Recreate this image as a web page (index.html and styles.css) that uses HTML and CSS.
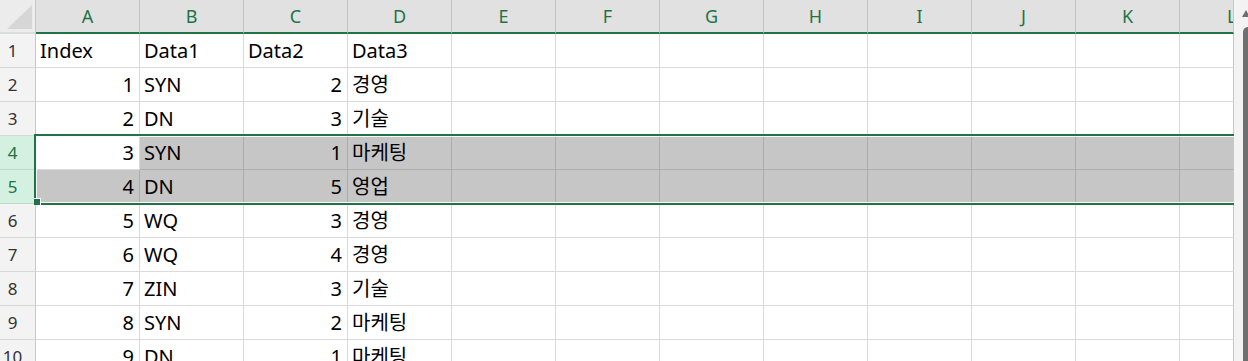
FILE: index.html
```html
<!DOCTYPE html>
<html>
<head>
    <meta http-equiv="Content-Type" content="text/html; charset=utf-8" />
    <title>Sheet1</title>
    <link rel="stylesheet" href="styles.css">
</head>
<body>
<div class="sheet">
    <div class="grid">
        <!--列标题-->
        <div class="row head">
            <div class="corner"><span class="tri"></span></div>
            <div class="ch">A</div><div class="ch">B</div><div class="ch">C</div><div class="ch">D</div>
            <div class="ch">E</div><div class="ch">F</div><div class="ch">G</div><div class="ch">H</div>
            <div class="ch">I</div><div class="ch">J</div><div class="ch">K</div><div class="ch last">L</div>
        </div>
        <div class="row">
            <div class="rh">1</div>
            <div class="c">Index</div><div class="c">Data1</div><div class="c">Data2</div><div class="c">Data3</div>
            <div class="c"></div><div class="c"></div><div class="c"></div><div class="c"></div>
            <div class="c"></div><div class="c"></div><div class="c"></div><div class="c last"></div>
        </div>
        <div class="row">
            <div class="rh">2</div>
            <div class="c num">1</div><div class="c">SYN</div><div class="c num">2</div><div class="c">경영</div>
            <div class="c"></div><div class="c"></div><div class="c"></div><div class="c"></div>
            <div class="c"></div><div class="c"></div><div class="c"></div><div class="c last"></div>
        </div>
        <div class="row">
            <div class="rh">3</div>
            <div class="c num">2</div><div class="c">DN</div><div class="c num">3</div><div class="c">기술</div>
            <div class="c"></div><div class="c"></div><div class="c"></div><div class="c"></div>
            <div class="c"></div><div class="c"></div><div class="c"></div><div class="c last"></div>
        </div>
        <div class="row">
            <div class="rh sel">4</div>
            <div class="c num">3</div><div class="c hl">SYN</div><div class="c hl num">1</div><div class="c hl">마케팅</div>
            <div class="c hl"></div><div class="c hl"></div><div class="c hl"></div><div class="c hl"></div>
            <div class="c hl"></div><div class="c hl"></div><div class="c hl"></div><div class="c hl last"></div>
        </div>
        <div class="row">
            <div class="rh sel">5</div>
            <div class="c hl num">4</div><div class="c hl">DN</div><div class="c hl num">5</div><div class="c hl">영업</div>
            <div class="c hl"></div><div class="c hl"></div><div class="c hl"></div><div class="c hl"></div>
            <div class="c hl"></div><div class="c hl"></div><div class="c hl"></div><div class="c hl last"></div>
        </div>
        <div class="row">
            <div class="rh">6</div>
            <div class="c num">5</div><div class="c">WQ</div><div class="c num">3</div><div class="c">경영</div>
            <div class="c"></div><div class="c"></div><div class="c"></div><div class="c"></div>
            <div class="c"></div><div class="c"></div><div class="c"></div><div class="c last"></div>
        </div>
        <div class="row">
            <div class="rh">7</div>
            <div class="c num">6</div><div class="c">WQ</div><div class="c num">4</div><div class="c">경영</div>
            <div class="c"></div><div class="c"></div><div class="c"></div><div class="c"></div>
            <div class="c"></div><div class="c"></div><div class="c"></div><div class="c last"></div>
        </div>
        <div class="row">
            <div class="rh">8</div>
            <div class="c num">7</div><div class="c">ZIN</div><div class="c num">3</div><div class="c">기술</div>
            <div class="c"></div><div class="c"></div><div class="c"></div><div class="c"></div>
            <div class="c"></div><div class="c"></div><div class="c"></div><div class="c last"></div>
        </div>
        <div class="row">
            <div class="rh">9</div>
            <div class="c num">8</div><div class="c">SYN</div><div class="c num">2</div><div class="c">마케팅</div>
            <div class="c"></div><div class="c"></div><div class="c"></div><div class="c"></div>
            <div class="c"></div><div class="c"></div><div class="c"></div><div class="c last"></div>
        </div>
        <div class="row">
            <div class="rh">10</div>
            <div class="c num">9</div><div class="c">DN</div><div class="c num">1</div><div class="c">마케팅</div>
            <div class="c"></div><div class="c"></div><div class="c"></div><div class="c"></div>
            <div class="c"></div><div class="c"></div><div class="c"></div><div class="c last"></div>
        </div>
        <!--选区 4:5 行-->
        <div class="selection"><span class="handle"></span></div>
    </div>
    <div class="vscroll">
        <span class="arrow"></span>
        <div class="thumb"></div>
    </div>
</div>
</body>
</html>
```

FILE: styles.css
```css
@charset "utf-8";
html,body,div{padding:0; margin:0; border:0;}
html,body{width:100%;height:100%;overflow:hidden;background:#fff;}
body{font-family:"Noto Sans","Noto Sans CJK KR",sans-serif;}

.sheet{
    display:flex;
    width:100%;
    height:100%;
}
.grid{
    position:relative;
    width:1234px;
    flex:none;
    overflow:hidden;
}
.row{
    display:flex;
    height:34px;
}

/*列标题*/
.row.head .corner,
.row.head .ch{
    box-sizing:border-box;
    height:34px;
}
.corner{
    position:relative;
    width:36px;
    flex:none;
    background-color:#ececec;
    border-right:1px solid #c8c8c8;
    border-bottom:2px solid #dcdcdc;
}
.corner .tri{
    position:absolute;
    right:3px;
    bottom:3px;
    width:0;
    height:0;
    border-left:25px solid transparent;
    border-bottom:24px solid #d6d6d6;
}
.ch{
    width:104px;
    flex:none;
    background-color:#e1e1e1;
    border-right:1px solid #c4c4c4;
    border-bottom:2px solid #217346;
    color:#217346;
    font-size:18px;
    line-height:32px;
    text-align:center;
}

/*行标题*/
.rh{
    box-sizing:border-box;
    width:36px;
    flex:none;
    padding-right:10px;
    background-color:#f3f3f3;
    border-right:1px solid #c8c8c8;
    border-bottom:1px solid #d6d6d6;
    color:#333;
    font-size:17px;
    line-height:33px;
    text-align:center;
}
.rh.sel{
    background-color:#d3f0e0;
    color:#217346;
    border-bottom-color:#bcd9c8;
}

/*单元格*/
.c{
    box-sizing:border-box;
    width:104px;
    flex:none;
    padding:0 4px;
    border-right:1px solid #dadada;
    border-bottom:1px solid #dadada;
    color:#000;
    font-size:20px;
    line-height:33px;
    white-space:nowrap;
    overflow:hidden;
}
.c.num{
    text-align:right;
    padding-right:5px;
}
.c.hl{
    background-color:#c6c6c6;
    border-right-color:#adadad;
    border-bottom-color:#adadad;
}
.ch.last,
.c.last{
    width:54px;
    border-right-color:#c8c8c8;
}
.ch.last{
    text-align:left;
    padding-left:47px;
    overflow:hidden;
    box-sizing:border-box;
}

/*选区*/
.selection{
    position:absolute;
    left:34px;
    top:134px;
    width:1240px;
    height:71px;
    box-sizing:border-box;
    border:2px solid #217346;
    box-shadow:inset 0 0 0 1px #fff;
}
.selection .handle{
    position:absolute;
    left:-2px;
    bottom:-2px;
    width:6px;
    height:6px;
    background-color:#217346;
    border-top:1px solid #fff;
    border-right:1px solid #fff;
}

/*滚动条*/
.vscroll{
    position:relative;
    flex:1;
    background-color:#f3f3f3;
}
.vscroll .arrow{
    position:absolute;
    left:8px;
    top:10px;
    width:0;
    height:0;
    border-left:4px solid transparent;
    border-right:4px solid transparent;
    border-bottom:7px solid #6f6f6f;
}
.vscroll .thumb{
    position:absolute;
    left:9px;
    top:27px;
    width:10px;
    bottom:0;
    background-color:#6f6f6f;
    border-radius:5px 5px 0 0;
}
```
